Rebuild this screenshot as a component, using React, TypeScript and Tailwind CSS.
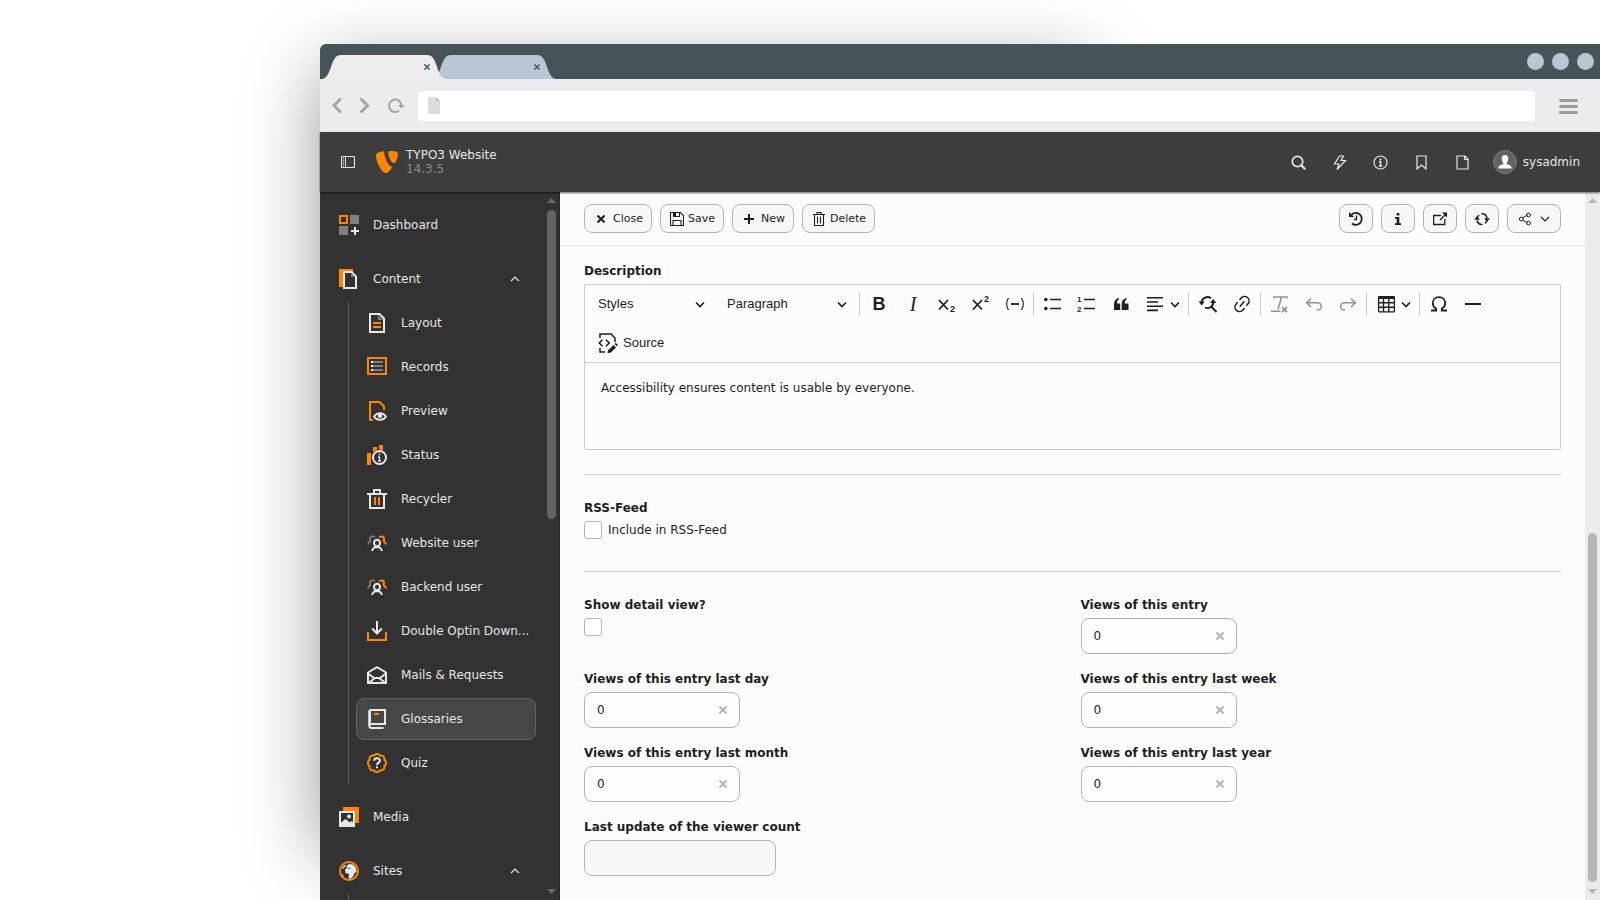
import type { ReactNode } from 'react';

type IconProps = { children: ReactNode; size?: 'sm' | 'md' | 'lg'; box?: string };

const sizes = { sm: 'size-3.5', md: 'size-4', lg: 'size-5' };

function Icon({ children, size = 'lg', box = '0 0 20 20' }: IconProps) {
  return (
    <svg viewBox={box} className={`shrink-0 ${sizes[size]}`} fill="none" stroke="none" aria-hidden="true">
      {children}
    </svg>
  );
}

function Chevron({ up = false }: { up?: boolean }) {
  return (
    <svg viewBox="0 0 10 10" className="size-2.5 shrink-0" fill="none" stroke="currentColor" strokeWidth="1.200" aria-hidden="true">
      <path d={up ? 'M1 7l4-4 4 4' : 'M1 3l4 4 4-4'} />
    </svg>
  );
}

function Cross({ small = false }: { small?: boolean }) {
  return (
    <svg
      viewBox="0 0 8 8"
      className={`shrink-0 ${small ? 'size-1.5' : 'size-2'}`}
      fill="none"
      stroke="currentColor"
      strokeWidth="2"
      aria-hidden="true"
    >
      <path d="M.5.5l7 7M7.500.5l-7 7" />
    </svg>
  );
}

const O = '#ff8700';
const W = '#e8e8e8';
const G = '#7f7f7f';
const D = '#313131';

const icons = {
  dashboard: (
    <Icon>
      <path d="M1 1h7v7H1z" stroke={O} strokeWidth="2" />
      <path d="M11 0h9v9h-9zM0 11h9v9H0z" fill={G} />
      <path d="M16 12v8M12 16h8" stroke={W} strokeWidth="2" />
    </Icon>
  ),
  content: (
    <Icon>
      <path d="M0 0h14v18H0z" fill={O} />
      <path d="M5 3h7.500L17 7.500V19H5z" fill={D} stroke={W} strokeWidth="2" />
      <path d="M12 4v4h4z" fill={G} />
    </Icon>
  ),
  layout: (
    <Icon>
      <path d="M3 1h9.500L17 5.500V19H3z" stroke={W} strokeWidth="2" />
      <path d="M11 2v5h5z" fill={G} />
      <path d="M6 10h8M6 14h8" stroke={O} strokeWidth="2" />
    </Icon>
  ),
  records: (
    <Icon>
      <path d="M1 1h18v16H1z" stroke={O} strokeWidth="2" />
      <path d="M6 5h10M6 9h10M6 13h10" stroke={G} strokeWidth="2" />
      <path d="M4 5h2M4 9h2M4 13h2" stroke={W} strokeWidth="2" />
    </Icon>
  ),
  preview: (
    <Icon>
      <path d="M6 19H3V1h9.500L17 5.500V9" stroke={O} strokeWidth="2" />
      <path d="M7 15.500c3-4.600 9-4.600 12 0-3 4.600-9 4.600-12 0z" stroke={W} strokeWidth="1.800" />
      <circle cx="13" cy="14.800" r="2.300" fill={W} />
    </Icon>
  ),
  status: (
    <Icon>
      <path d="M0 8h4v12H0zM6 2h4v8H6zM12 0h4v8h-4z" fill={O} />
      <circle cx="12.500" cy="12.500" r="8" fill={D} />
      <circle cx="12.500" cy="12.500" r="6.500" stroke={W} strokeWidth="2" />
      <path d="M12.500 8.500v2M12.500 11.500v5M11 12h1.500M11 16h3" stroke={W} strokeWidth="1.300" />
    </Icon>
  ),
  recycler: (
    <Icon>
      <path d="M0 5h20M7 5V1h6v4M3 5v14h14V5" stroke={W} strokeWidth="2" />
      <path d="M8 8v8M12 8v8" stroke={O} strokeWidth="2" />
    </Icon>
  ),
  user: (
    <Icon>
      <path d="M7.800 4.500C6.500 2.800 3 3 3 5.800c0 1.700.8 2.200-.2 3C1.500 9.500 1 10 1 11.500" stroke={G} strokeWidth="1.800" />
      <path d="M12.200 4.500C13.500 2.800 17 3 17 5.800c0 1.700-.8 2.200.2 3 1.300.7 1.800 1.200 1.800 2.700" stroke={O} strokeWidth="2" />
      <ellipse cx="10" cy="10" rx="3" ry="3.200" stroke={W} strokeWidth="2" />
      <path d="M5 18c.2-1.800 1.200-2.700 3-3.800h4c1.800 1.100 2.800 2 3 3.800" stroke={W} strokeWidth="2" />
    </Icon>
  ),
  download: (
    <Icon>
      <path d="M1 11v8h18v-8" stroke={O} strokeWidth="2" />
      <path d="M10 0v12M5.200 7.500L10 12.500l4.800-5" stroke={W} strokeWidth="2" />
    </Icon>
  ),
  mail: (
    <Icon>
      <path d="M1 7.500L10 2.200l9 5.300V18H1z" stroke={W} strokeWidth="2" />
      <path d="M1 8.500l6 4.500h6l6-4.500M1.500 18L8 13M18.500 18L12 13" stroke={W} strokeWidth="1.800" />
    </Icon>
  ),
  book: (
    <Icon>
      <path d="M2.200 17V3C2.200 1.500 2.700 1 4 1h14v14H4.500c-2.800 0-2.800 4 0 4h12" stroke={W} strokeWidth="2" />
      <path d="M3.500 2v12.500" stroke={W} />
      <path d="M7 5h5" stroke={O} strokeWidth="2" />
    </Icon>
  ),
  quiz: (
    <Icon box="1 1 22 22">
      <path
        d="M3.850 8.620a4 4 0 0 1 4.780-4.770 4 4 0 0 1 6.740 0 4 4 0 0 1 4.780 4.780 4 4 0 0 1 0 6.740 4 4 0 0 1-4.770 4.780 4 4 0 0 1-6.750 0 4 4 0 0 1-4.780-4.770 4 4 0 0 1 0-6.760Z"
        stroke={O}
        strokeWidth="2.200"
      />
      <path d="M8.800 9.500c.3-3.600 6.400-3.400 6.400 0 0 2-3.200 2.200-3.200 4.700M12 15.500v2.300" stroke={W} strokeWidth="2.200" />
    </Icon>
  ),
  media: (
    <Icon>
      <path d="M4 0h16v16H4z" fill={O} />
      <path d="M0 4h16v16H0z" fill={W} />
      <path d="M2 6h12v9l-1.500-1L11 15.500 6.500 12 2 15.500z" fill={D} />
      <circle cx="10" cy="9.500" r="2" fill={W} />
    </Icon>
  ),
  globe: (
    <Icon>
      <circle cx="10" cy="10" r="9" stroke={O} strokeWidth="2" />
      <path d="M7 5.500L10 3l4 .5L17 7l.5 4-2 1-1 3-3 3-2-1 .5-4-3.500-1L6 8.500l2-1.500 3 1 .5-1-4-.5z" fill={W} />
      <path d="M3 7.500l2-3 2-1-1 2-2 2.500zM3 13l1.500 1 .5 2z" fill={W} />
    </Icon>
  ),
};

type IconName = keyof typeof icons;

const contentModules: { label: string; icon: IconName; active?: boolean }[] = [
  { label: 'Layout', icon: 'layout' },
  { label: 'Records', icon: 'records' },
  { label: 'Preview', icon: 'preview' },
  { label: 'Status', icon: 'status' },
  { label: 'Recycler', icon: 'recycler' },
  { label: 'Website user', icon: 'user' },
  { label: 'Backend user', icon: 'user' },
  { label: 'Double Optin Down...', icon: 'download' },
  { label: 'Mails & Requests', icon: 'mail' },
  { label: 'Glossaries', icon: 'book', active: true },
  { label: 'Quiz', icon: 'quiz' },
];

function Tab({ active = false }: { active?: boolean }) {
  return (
    <div className={`relative flex h-6 w-[124px] items-center justify-end pr-4 ${active ? 'z-10' : '-ml-3.5'}`}>
      <svg
        viewBox="0 0 124 24"
        preserveAspectRatio="none"
        className={`absolute inset-0 size-full ${active ? 'fill-[#ebedef]' : 'fill-[#b9c6d3]'}`}
        aria-hidden="true"
      >
        <path d="M0 24C8 23 8 10 13 3q2-3 6-3h86q4 0 6 3c5 7 5 20 13 21z" />
      </svg>
      <button type="button" aria-label="Close tab" className="relative text-[#42566b]">
        <Cross small />
      </button>
    </div>
  );
}

function BrowserChrome() {
  return (
    <div className="shrink-0">
      <div className="flex h-[35px] items-end justify-between rounded-tl-md bg-[#465358] pl-0.5 pr-1.5">
        <div className="flex">
          <Tab active />
          <Tab />
        </div>
        <div className="flex gap-2 self-center">
          <span className="size-[17px] rounded-full bg-[#b9c6d3]" />
          <span className="size-[17px] rounded-full bg-[#b9c6d3]" />
          <span className="size-[17px] rounded-full bg-[#b9c6d3]" />
        </div>
      </div>
      <div className="flex h-[53px] items-center bg-[#ebecee] pl-3 pr-[22px] text-[#a5a5a5]">
        <button type="button" aria-label="Back">
          <svg viewBox="0 0 10 16" className="h-4 w-2.5" fill="none" stroke="currentColor" strokeWidth="3" aria-hidden="true">
            <path d="M8 1.500L2 7.500l6 6" strokeLinecap="round" />
          </svg>
        </button>
        <button type="button" aria-label="Forward" className="ml-[18px]">
          <svg viewBox="0 0 10 16" className="h-4 w-2.5" fill="none" stroke="currentColor" strokeWidth="3" aria-hidden="true">
            <path d="M1.500 1.500l6 6-6 6" strokeLinecap="round" />
          </svg>
        </button>
        <button type="button" aria-label="Reload" className="ml-[18px]">
          <svg viewBox="0 0 17 16" className="h-4 w-[17px]" fill="none" stroke="currentColor" strokeWidth="2" aria-hidden="true">
            <path d="M11 12.800A6.200 6.200 0 1 1 13.500 7.500" />
            <path d="M10 7h7L13.500 10.500z" fill="currentColor" stroke="none" />
          </svg>
        </button>
        <label className="ml-[13px] flex h-[30px] flex-1 items-center rounded bg-white px-2.5">
          <svg viewBox="0 0 12 17" className="h-[17px] w-3" aria-hidden="true">
            <path d="M0 0h8l4 4v13H0z" fill="#dcdcdc" />
            <path d="M8 0v4h4z" fill="#bdbdbd" />
          </svg>
          <input type="text" aria-label="Address" className="min-w-0 flex-1 bg-transparent px-2 text-xs outline-none" />
        </label>
        <button type="button" aria-label="Menu" className="ml-6">
          <svg viewBox="0 0 19 16" className="h-4 w-[19px]" fill="none" stroke="#9b9b9b" strokeWidth="3" strokeLinecap="round" aria-hidden="true">
            <path d="M1.500 2.500h16M1.500 8.500h16M1.500 14.500h16" />
          </svg>
        </button>
      </div>
    </div>
  );
}

const topbarTools: { label: string; icon: ReactNode }[] = [
  {
    label: 'Search',
    icon: (
      <>
        <circle cx="6.500" cy="6.500" r="5.200" strokeWidth="1.700" />
        <path d="M10.200 10.200l4 4" strokeWidth="2.200" />
      </>
    ),
  },
  { label: 'Clear cache', icon: <path d="M7.500 1h4L9 5.500h4.500L5 14.500l2-5.500H2.500z" /> },
  {
    label: 'System information',
    icon: (
      <>
        <circle cx="7.500" cy="7.500" r="6.500" />
        <path d="M7.500 3.500v2" strokeWidth="1.800" />
        <path d="M6 6.800h1.500v4M5.800 11h3.600" strokeWidth="1.400" />
      </>
    ),
  },
  { label: 'Bookmarks', icon: <path d="M3 1h9v13l-4.500-4L3 14z" /> },
  { label: 'Documents', icon: <path d="M2 1h8l3 3v10H2zM9.500 1v3.500H13" /> },
];

function Topbar() {
  return (
    <header className="z-10 flex h-[60px] shrink-0 items-center bg-[#3d3d3d] pl-[21px] pr-5 text-xs text-[#e6e6e6] shadow-[0_1px_2px_rgba(0,0,0,0.6)]">
      <button type="button" aria-label="Toggle sidebar">
        <svg viewBox="0 0 14 12" className="h-3 w-3.5" fill="none" stroke="currentColor" aria-hidden="true">
          <rect x=".5" y=".5" width="13" height="11" rx="1" strokeWidth="1.200" />
          <path d="M4.500 1v10" />
          <path d="M2.500 2v8.500" strokeDasharray="1.200 1" />
        </svg>
      </button>
      <a href="#" className="ml-[21px] flex items-center gap-2">
        <svg viewBox="0 0 22 22" className="size-[22px]" fill={O} aria-hidden="true">
          <path d="M16.300 15.400c-.3.100-.6.100-.9.100-3 0-7.200-10.300-7.200-13.800C8.200.4 8.500 0 9 0 5.300.4 1 1.700.4 2.900.1 3.300 0 4 0 4.900 0 10.400 5.800 22 9.900 22c1.900 0 5-3 6.400-6.600z" />
          <path d="M14.500 0c3.800 0 7.500.6 7.500 2.700 0 4.300-2.700 9.500-4.100 9.500-2.500 0-5.600-6.900-5.600-10.300C12.300.3 12.900 0 14.500 0z" />
        </svg>
        <span className="leading-[14px]">
          <span className="block">TYPO3 Website</span>
          <span className="block text-[#8c8c8c]">14.3.5</span>
        </span>
      </a>
      <div className="ml-auto flex items-center">
        {topbarTools.map((tool) => (
          <button key={tool.label} type="button" aria-label={tool.label} className="flex w-[41px] justify-center">
            <svg viewBox="0 0 15 15" className="size-[15px]" fill="none" stroke="currentColor" strokeWidth="1.200" aria-hidden="true">
              {tool.icon}
            </svg>
          </button>
        ))}
        <button type="button" className="ml-2.5 flex items-center gap-1.5">
          <span className="flex size-6 items-center justify-center rounded-full border border-[#7a7a7a] bg-[#636363]">
            <svg viewBox="0 0 14 14" className="size-3.5" fill="#fff" aria-hidden="true">
              <path d="M7 0c2 0 3.200 1.200 3.200 3.500S9 7.500 8.700 8v1.200c3 .8 5 1.300 5 4.300H.3c0-3 2-3.500 5-4.300V8C5 7.500 3.800 5.800 3.800 3.500S5 0 7 0z" />
            </svg>
          </span>
          sysadmin
        </button>
      </div>
    </header>
  );
}

function Scrollbar({ dark = false }: { dark?: boolean }) {
  const arrow = dark ? 'fill-[#6b6b6b]' : 'fill-[#b5b5b5]';
  return (
    <div className={`flex w-[15px] shrink-0 flex-col items-center justify-between py-1.5 ${dark ? '' : 'bg-[#ebebeb]'}`} aria-hidden="true">
      <svg viewBox="0 0 9 5" className={`h-[5px] w-[9px] ${arrow}`}>
        <path d="M0 5l4.500-5L9 5z" />
      </svg>
      <div className={`my-[7px] flex flex-1 flex-col ${dark ? 'justify-start' : 'justify-end'}`}>
        <div className={`w-[9px] rounded-full ${dark ? 'h-[46%] bg-[#646464]' : 'h-[52%] bg-[#b5b5b5]'}`} />
      </div>
      <svg viewBox="0 0 9 5" className={`h-[5px] w-[9px] ${arrow}`}>
        <path d="M0 0l4.500 5L9 0z" />
      </svg>
    </div>
  );
}

function NavLink({ label, icon, active = false, expandable = false }: { label: string; icon: IconName; active?: boolean; expandable?: boolean }) {
  return (
    <a
      href="#"
      className={`flex h-[42px] items-center gap-3.5 rounded-lg border pl-2.5 pr-[15px] ${active ? 'border-[#646464] bg-[#464646]' : 'border-transparent'}`}
    >
      {icons[icon]}
      <span className="flex-1 whitespace-nowrap">{label}</span>
      {expandable && <Chevron up />}
    </a>
  );
}

function Sidebar() {
  return (
    <aside className="flex w-60 shrink-0 border-r border-[#282828] bg-[#323232] text-xs text-[#e6e6e6]">
      <nav className="flex-1 overflow-hidden px-2 pt-3">
        <ul className="flex flex-col gap-3">
          <li>
            <NavLink label="Dashboard" icon="dashboard" />
          </li>
          <li>
            <NavLink label="Content" icon="content" expandable />
            <ul className="ml-5 mt-0.5 flex flex-col gap-0.5 border-l border-[#5a5a5a] pl-[7px]">
              {contentModules.map((item) => (
                <li key={item.label}>
                  <NavLink {...item} />
                </li>
              ))}
            </ul>
          </li>
          <li>
            <NavLink label="Media" icon="media" />
          </li>
          <li>
            <NavLink label="Sites" icon="globe" expandable />
            <div className="ml-5 mt-0.5 h-10 border-l border-[#5a5a5a]" />
          </li>
        </ul>
      </nav>
      <Scrollbar dark />
    </aside>
  );
}

const docButton = 'flex h-[29px] items-center rounded-lg border border-[#b4b4b4] bg-[#f7f7f7] text-[11px] leading-[17px]';

function DocHeader() {
  return (
    <div className="flex h-[54px] shrink-0 items-center justify-between border-b border-[#e4e4e4] px-6">
      <div className="flex gap-2">
        <button type="button" className={`${docButton} w-[68px] gap-2 pl-3`}>
          <Cross />
          Close
        </button>
        <button type="button" className={`${docButton} w-16 gap-1 pl-[9px]`}>
          <Icon size="sm" box="0 0 14 14">
            <path d="M.5.5h10l3 3v10H.5zM3.500.5v4h6v-4M3 13.500v-5h8v5" stroke="currentColor" strokeWidth="1.100" />
            <path d="M4 1h2v3H4z" fill="currentColor" />
          </Icon>
          Save
        </button>
        <button type="button" className={`${docButton} w-[62px] gap-[7px] pl-[11px]`}>
          <svg viewBox="0 0 10 10" className="size-2.5" stroke="currentColor" strokeWidth="2" aria-hidden="true">
            <path d="M5 0v10M0 5h10" />
          </svg>
          New
        </button>
        <button type="button" className={`${docButton} w-[73px] gap-1 pl-[9px]`}>
          <Icon size="sm" box="0 0 14 14">
            <path d="M1 2.500h12M5 2.500v-2h4v2M2.500 2.500v11h9v-11M5.500 4.500v7M8.500 4.500v7" stroke="currentColor" strokeWidth="1.100" />
          </Icon>
          Delete
        </button>
      </div>
      <div className="flex gap-2">
        <button type="button" aria-label="History" className={`${docButton} w-[34px] justify-center`}>
          <Icon size="md" box="0 0 16 16">
            <path d="M3.800 3.300A6 6 0 1 1 4 12.500" stroke="currentColor" strokeWidth="1.800" />
            <path d="M1 1v5h5L4.200 4z" fill="currentColor" />
            <path d="M8.500 4.500v4H6" stroke="currentColor" strokeWidth="1.300" />
          </Icon>
        </button>
        <button type="button" aria-label="Info" className={`${docButton} w-[34px] justify-center`}>
          <Icon size="sm" box="0 0 14 14">
            <path d="M5.700 1h2.600v2.500H5.700zM4 5h4.300v6.200H10V13H4v-1.800h1.700V6.700H4z" fill="currentColor" />
          </Icon>
        </button>
        <button type="button" aria-label="Open in new window" className={`${docButton} w-[34px] justify-center`}>
          <Icon size="sm" box="0 0 14 14">
            <path d="M8 3.500H.6v9h11.200V7" stroke="currentColor" strokeWidth="1.300" />
            <path d="M7 8l5-5" stroke="currentColor" strokeWidth="1.500" />
            <path d="M9 .5h5v5z" fill="currentColor" />
          </Icon>
        </button>
        <button type="button" aria-label="Refresh" className={`${docButton} w-[34px] justify-center`}>
          <Icon size="md" box="0 0 16 16">
            <path d="M3 9.500A5.300 5.300 0 0 0 8.500 13.500M3 8a5 5 0 0 1 2-4M7.500 2.700A5.300 5.300 0 0 1 13 7M13 8.500a5 5 0 0 1-2 3.800" stroke="currentColor" strokeWidth="1.500" />
            <path d="M0 8.800L3 5.300l3 3.500zM10 7.200h6l-3 3.500z" fill="currentColor" />
          </Icon>
        </button>
        <button type="button" aria-label="Share" className={`${docButton} w-[54px] gap-2 pl-2.5`}>
          <Icon size="sm" box="0 0 14 14">
            <path d="M4.500 6l5-3M4.500 8l5 3" stroke="currentColor" />
            <circle cx="3.300" cy="7" r="1.900" stroke="currentColor" />
            <circle cx="10.500" cy="3" r="1.900" stroke="currentColor" />
            <circle cx="10.500" cy="11" r="1.900" stroke="currentColor" />
          </Icon>
          <Chevron />
        </button>
      </div>
    </div>
  );
}

function DropArrow({ className = '' }: { className?: string }) {
  return (
    <svg viewBox="0 0 10 10" className={`size-2.5 shrink-0 ${className}`} fill="none" stroke="currentColor" strokeWidth="1.600" aria-hidden="true">
      <path d="M1 3.500l4 4 4-4" />
    </svg>
  );
}

function ToolbarSelect({ label, value, className }: { label: string; value: string; className: string }) {
  return (
    <span className={`relative flex items-center ${className}`}>
      <select aria-label={label} className="h-8 w-full appearance-none bg-transparent px-2.5 outline-none">
        <option>{value}</option>
      </select>
      <DropArrow className="pointer-events-none absolute right-2.5" />
    </span>
  );
}

function ToolButton({ label, children, muted = false, split = false }: { label: string; children: ReactNode; muted?: boolean; split?: boolean }) {
  return (
    <button
      type="button"
      aria-label={label}
      disabled={muted}
      className={`flex h-8 items-center justify-center ${split ? 'w-[47px] gap-[5px]' : 'w-8'} ${muted ? 'text-[#919191]' : ''}`}
    >
      {children}
      {split && <DropArrow />}
    </button>
  );
}

function Separator() {
  return <span className="mr-px h-6 w-px bg-[#cbcbcb]" />;
}

function EditorToolbar() {
  return (
    <div
      role="toolbar"
      aria-label="Editor toolbar"
      className="flex flex-wrap items-center gap-x-0.5 gap-y-[7px] border-b border-[#cbcbcb] px-[3px] py-[3px] font-['Liberation_Sans',Arial,sans-serif] text-[13px]"
    >
      <ToolbarSelect label="Styles" value="Styles" className="w-[127px]" />
      <ToolbarSelect label="Heading" value="Paragraph" className="w-[140px]" />
      <Separator />
      <ToolButton label="Bold">
        <span className="text-lg font-bold">B</span>
      </ToolButton>
      <ToolButton label="Italic">
        <span className="font-['Liberation_Serif',serif] text-xl italic">I</span>
      </ToolButton>
      <ToolButton label="Subscript">
        <Icon>
          <path d="M2 6l9 9.500M11 6l-9 9.500" stroke="currentColor" strokeWidth="1.800" />
          <text x="13" y="18" fontSize="9" fontWeight="bold" fill="currentColor">2</text>
        </Icon>
      </ToolButton>
      <ToolButton label="Superscript">
        <Icon>
          <path d="M2 6l9 9.500M11 6l-9 9.500" stroke="currentColor" strokeWidth="1.800" />
          <text x="13" y="8" fontSize="9" fontWeight="bold" fill="currentColor">2</text>
        </Icon>
      </ToolButton>
      <ToolButton label="Soft hyphen">
        <Icon>
          <path d="M3.500 4c-2.300 3.500-2.300 8.500 0 12M16.500 4c2.300 3.500 2.300 8.500 0 12" stroke="currentColor" strokeWidth="1.300" />
          <path d="M6 10h8" stroke="currentColor" strokeWidth="1.800" />
        </Icon>
      </ToolButton>
      <Separator />
      <ToolButton label="Bulleted list">
        <Icon>
          <path d="M7 5.500h11M7 14.500h11" stroke="currentColor" strokeWidth="1.500" />
          <circle cx="2.800" cy="5.500" r="1.800" fill="currentColor" />
          <circle cx="2.800" cy="14.500" r="1.800" fill="currentColor" />
        </Icon>
      </ToolButton>
      <ToolButton label="Numbered list">
        <Icon>
          <path d="M7 5.500h11M7 14.500h11" stroke="currentColor" strokeWidth="1.500" />
          <text x="0" y="8" fontSize="8" fontWeight="bold" fill="currentColor">1</text>
          <text x="0" y="18" fontSize="8" fontWeight="bold" fill="currentColor">2</text>
        </Icon>
      </ToolButton>
      <ToolButton label="Block quote">
        <Icon>
          <path d="M3 10.500c0-3.600 1.700-6 5-6.500v1.200C6.500 6 5.800 7.500 6 9.500h3.200V16H3zM10.700 10.500c0-3.600 1.700-6 5-6.500v1.200c-1.500.8-2.200 2.300-2 4.300H17.500V16h-6.800z" fill="currentColor" />
        </Icon>
      </ToolButton>
      <ToolButton label="Text alignment" split>
        <Icon>
          <path d="M2 3.800h16M2 8h11M2 12.200h16M2 16.400h11" stroke="currentColor" strokeWidth="1.600" />
        </Icon>
      </ToolButton>
      <Separator />
      <ToolButton label="Find and replace">
        <Icon>
          <path d="M3.500 8.500A6 6 0 0 1 13 4.200M15.300 7.500a6 6 0 0 1-8.500 6" stroke="currentColor" strokeWidth="1.900" />
          <path d="M13.500 13l5 5" stroke="currentColor" strokeWidth="2" />
          <path d="M.5 7.500h6.200l-3 4zM12 9l3.200-4 3 4z" fill="currentColor" />
        </Icon>
      </ToolButton>
      <ToolButton label="Link">
        <Icon>
          <g transform="rotate(-50 10 10)" stroke="currentColor" strokeWidth="1.500">
            <path d="M8.500 5.500H6a4.500 4.500 0 0 0 0 9h2.500M11.500 5.500H14a4.500 4.500 0 0 1 0 9h-2.500M6.500 10h7" />
          </g>
        </Icon>
      </ToolButton>
      <Separator />
      <ToolButton label="Remove format" muted>
        <Icon>
          <path d="M4 4.500V3h13v1.500M11.500 3L8 15.500M1 17.300h9.500" stroke="currentColor" strokeWidth="1.500" />
          <path d="M12 13.200l5 5M17 13.200l-5 5" stroke="currentColor" strokeWidth="1.700" />
        </Icon>
      </ToolButton>
      <ToolButton label="Undo" muted>
        <Icon>
          <path d="M7 4.500L2.500 8.700 7 13M2.500 8.700h11c5.500.3 5 7.300-.5 7.300" stroke="currentColor" strokeWidth="1.500" />
        </Icon>
      </ToolButton>
      <ToolButton label="Redo" muted>
        <Icon>
          <path d="M13 4.500l4.500 4.200L13 13M17.500 8.700h-11C1 9 1.500 16 7 16" stroke="currentColor" strokeWidth="1.500" />
        </Icon>
      </ToolButton>
      <Separator />
      <ToolButton label="Insert table" split>
        <Icon>
          <rect x="2.600" y="2.600" width="15.800" height="15.300" rx="1" stroke="currentColor" strokeWidth="1.300" />
          <path d="M2.500 3.500h16" stroke="currentColor" strokeWidth="3" />
          <path d="M7.500 4v14M12.800 4v14M3 8.800h15M3 13.200h15" stroke="currentColor" strokeWidth="1.400" />
        </Icon>
      </ToolButton>
      <Separator />
      <ToolButton label="Special characters">
        <Icon>
          <path d="M2 16.500h5.200v-1.800C4.500 13 3.800 11 3.800 9.200 3.800 5.500 6.300 3.200 10 3.200s6.200 2.300 6.200 6c0 1.800-.7 3.800-3.400 5.500v1.800H18" stroke="currentColor" strokeWidth="1.800" />
        </Icon>
      </ToolButton>
      <ToolButton label="Horizontal line">
        <Icon>
          <path d="M2 10h16" stroke="currentColor" strokeWidth="2" />
        </Icon>
      </ToolButton>
      <div className="basis-full">
        <button type="button" className="flex h-8 items-center gap-[5px] pl-2.5">
          <Icon>
            <path d="M2 5V1h11l4 4v4M2 15v4h5" stroke="currentColor" strokeWidth="1.500" />
            <path d="M4.500 6.800L1.200 10l3.300 3.200M8 6.800l3.300 3.200L8 13.200" stroke="currentColor" strokeWidth="1.500" />
            <path d="M10 17.500l5.500-5.500 2.500 2.500-5.500 5.300-3 .2zM16.500 11l1.200-1.200 2.300 2.300-1.200 1.200z" fill="currentColor" />
          </Icon>
          Source
        </button>
      </div>
    </div>
  );
}

const labelText = 'block text-xs leading-[18px] font-bold';
const checkbox = 'size-[18px] shrink-0 appearance-none rounded-[3px] border border-[#b4b4b4] bg-white';

function CounterField({ id, label }: { id: string; label: string }) {
  return (
    <div>
      <label htmlFor={id} className={labelText}>
        {label}
      </label>
      <div className="mt-1 flex h-9 w-[156px] items-center rounded-lg border border-[#b4b4b4] bg-[#fdfdfd] px-3">
        <input id={id} type="text" defaultValue="0" className="min-w-0 flex-1 bg-transparent text-xs outline-none" />
        <button type="button" aria-label={`Clear ${label}`} className="text-[#b4b4b4]">
          <Cross />
        </button>
      </div>
    </div>
  );
}

function RecordForm() {
  return (
    <form className="px-6 pt-4 text-xs">
      <label htmlFor="description" className={labelText}>
        Description
      </label>
      <div className="mt-1 rounded-xs border border-[#cbcbcb]">
        <EditorToolbar />
        <textarea
          id="description"
          defaultValue="Accessibility ensures content is usable by everyone."
          className="block h-[86px] w-full resize-none bg-transparent px-4 pt-4 leading-[18px] outline-none"
        />
      </div>

      <fieldset className="mt-6 border-t border-[#cbcbcb] pb-8 pt-6">
        <span className={labelText}>RSS-Feed</span>
        <label className="mt-1 flex items-center gap-1.5 leading-[18px]">
          <input type="checkbox" className={checkbox} />
          Include in RSS-Feed
        </label>
      </fieldset>

      <div className="grid grid-cols-2 gap-4 border-t border-[#cbcbcb] pt-6">
        <div>
          <label htmlFor="detail-view" className={labelText}>
            Show detail view?
          </label>
          <input id="detail-view" type="checkbox" className={`mt-1 block ${checkbox}`} />
        </div>
        <CounterField id="views" label="Views of this entry" />
        <CounterField id="views-day" label="Views of this entry last day" />
        <CounterField id="views-week" label="Views of this entry last week" />
        <CounterField id="views-month" label="Views of this entry last month" />
        <CounterField id="views-year" label="Views of this entry last year" />
        <div>
          <label htmlFor="last-update" className={labelText}>
            Last update of the viewer count
          </label>
          <input id="last-update" type="text" disabled className="mt-1 block h-9 w-48 rounded-lg border border-[#b4b4b4] bg-[#f7f7f7] px-3" />
        </div>
      </div>
    </form>
  );
}

export default function App() {
  return (
    <div className="h-screen overflow-hidden bg-white pl-[20%] pt-11 font-['DejaVu_Sans',Verdana,sans-serif] text-[#1e1e1e]">
      <div className="relative h-full">
        <div className="absolute left-0 top-6 h-[92%] w-[60%] shadow-[0_0_70px_rgba(0,0,0,0.4)]" />
        <div className="relative flex h-full flex-col">
          <BrowserChrome />
          <Topbar />
          <div className="flex min-h-0 flex-1">
            <Sidebar />
            <main className="flex min-w-0 flex-1 bg-[#fcfcfc]">
              <div className="min-w-0 flex-1 overflow-hidden">
                <DocHeader />
                <RecordForm />
              </div>
              <Scrollbar />
            </main>
          </div>
        </div>
      </div>
    </div>
  );
}
